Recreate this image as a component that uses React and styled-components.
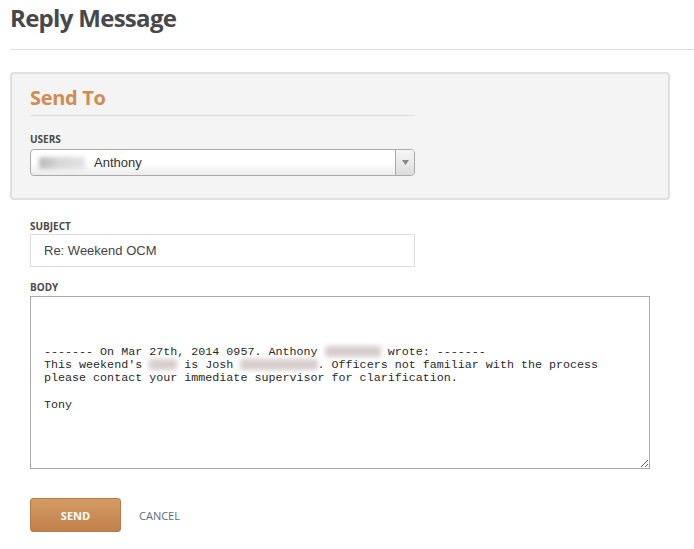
import React from "react";
import styled, { createGlobalStyle } from "styled-components";

const GlobalStyle = createGlobalStyle`
  body {
    margin: 0;
    background: #ffffff;
    font-family: "Open Sans", sans-serif;
  }
`;

const ReplyMessage = () => {
  return (
    <Page>
      <GlobalStyle />
      <Header>
        <Title>Reply Message</Title>
      </Header>

      <Panel>
        <PanelTitle>Send To</PanelTitle>
        <Label $gap={3}>Users</Label>
        <Select>
          <SelectValue>
            <NameBlur />
            Anthony
          </SelectValue>
          <SelectArrow>
            <svg width="7" height="5" viewBox="0 0 7 5">
              <path d="M0 0 L7 0 L3.5 5 Z" fill="#888" />
            </svg>
          </SelectArrow>
        </Select>
      </Panel>

      <Form>
        <Label $gap={1}>Subject</Label>
        <TextInput defaultValue="Re: Weekend OCM" />

        <Label $gap={2} $top={13}>Body</Label>
        <BodyArea>
          {"\n\n\n------- On Mar 27th, 2014 0957. Anthony "}
          <Blur $chars={8} />
          {" wrote: -------\nThis weekend's "}
          <Blur $chars={4} />
          {" is Josh "}
          <Blur $chars={11} />
          {". Officers not familiar with the process\nplease contact your immediate supervisor for clarification.\n\nTony"}
        </BodyArea>

        <Actions>
          <SendButton>Send</SendButton>
          <CancelButton>Cancel</CancelButton>
        </Actions>
      </Form>
    </Page>
  );
};

export default ReplyMessage;

// Styled Components
const Page = styled.div`
  padding-left: 10px;
  padding-bottom: 20px;
`;

const Header = styled.div`
  padding-top: 3px;
  padding-bottom: 16px;
  border-bottom: 1px solid #dddddd;
`;

const Title = styled.h1`
  margin: 0;
  font-size: 24px;
  line-height: 30px;
  font-weight: 700;
  color: #47474c;
  letter-spacing: -0.7px;
`;

const Panel = styled.div`
  margin: 22px 24px 0 0;
  padding: 12px 18px 22px;
  border: 2px solid #e0e0e0;
  border-radius: 4px;
  background: #f4f4f4;
`;

const PanelTitle = styled.h2`
  width: 385px;
  margin: 0 0 16px;
  padding-bottom: 5px;
  border-bottom: 1px solid #dddddd;
  font-size: 20px;
  line-height: 24px;
  font-weight: 700;
  color: #d28b53;
  letter-spacing: -0.3px;
`;

const Label = styled.label`
  display: block;
  margin-top: ${(p) => p.$top || 0}px;
  margin-bottom: ${(p) => p.$gap}px;
  font-size: 10px;
  line-height: 14px;
  font-weight: 700;
  color: #4a4a4a;
  text-transform: uppercase;
`;

const Select = styled.div`
  width: 385px;
  height: 27px;
  box-sizing: border-box;
  display: flex;
  align-items: center;
  border: 1px solid #aaaaaa;
  border-radius: 4px;
  background: linear-gradient(#ffffff 50%, #ececec);
  font-family: "Liberation Sans", sans-serif;
  font-size: 13px;
  color: #333333;
`;

const SelectValue = styled.div`
  flex: 1;
  display: flex;
  align-items: center;
  padding-left: 8px;
`;

const NameBlur = styled.span`
  display: inline-block;
  width: 46px;
  height: 12px;
  margin-right: 9px;
  border-radius: 3px;
  background: linear-gradient(90deg, #b8b8b8 0%, #d8d8d8 45%, #e2e2e2 100%);
  filter: blur(2px);
`;

const SelectArrow = styled.div`
  width: 18px;
  align-self: stretch;
  display: flex;
  align-items: center;
  justify-content: center;
  border-left: 1px solid #aaaaaa;
  border-radius: 0 3px 3px 0;
  background: linear-gradient(#f6f6f6, #dcdcdc);
`;

const Blur = styled.span`
  display: inline-block;
  width: ${(p) => p.$chars}ch;
  height: 11px;
  vertical-align: -2px;
  border-radius: 2px;
  background: #d6cccc;
  filter: blur(2.5px);
`;

const Form = styled.div`
  padding: 19px 0 0 20px;
`;

const TextInput = styled.input`
  display: block;
  width: 385px;
  height: 33px;
  box-sizing: border-box;
  margin: 0;
  padding: 0 13px;
  border: 1px solid #dddddd;
  border-radius: 0;
  outline: none;
  font-family: "Liberation Sans", sans-serif;
  font-size: 13px;
  color: #444444;
`;

const BodyArea = styled.div`
  width: 620px;
  height: 173px;
  box-sizing: border-box;
  padding: 9px 13px;
  border: 1px solid #a9a9a9;
  font-family: "Liberation Mono", monospace;
  font-size: 11.7px;
  line-height: 13.3px;
  color: #2a2a2a;
  white-space: pre-wrap;
  overflow: auto;
  resize: both;
`;

const Actions = styled.div`
  display: flex;
  align-items: center;
  margin-top: 29px;
`;

const SendButton = styled.button`
  width: 91px;
  height: 34px;
  border: 1px solid #b97b48;
  border-radius: 3px;
  background: linear-gradient(#d59b65, #c0804a);
  color: #ffffff;
  font-family: "Open Sans", sans-serif;
  font-size: 11px;
  font-weight: 700;
  text-transform: uppercase;
  cursor: pointer;
`;

const CancelButton = styled.button`
  margin-left: 18px;
  padding: 0;
  border: none;
  background: none;
  color: #5b6b7f;
  font-family: "Open Sans", sans-serif;
  font-size: 11px;
  text-transform: uppercase;
  cursor: pointer;
`;
